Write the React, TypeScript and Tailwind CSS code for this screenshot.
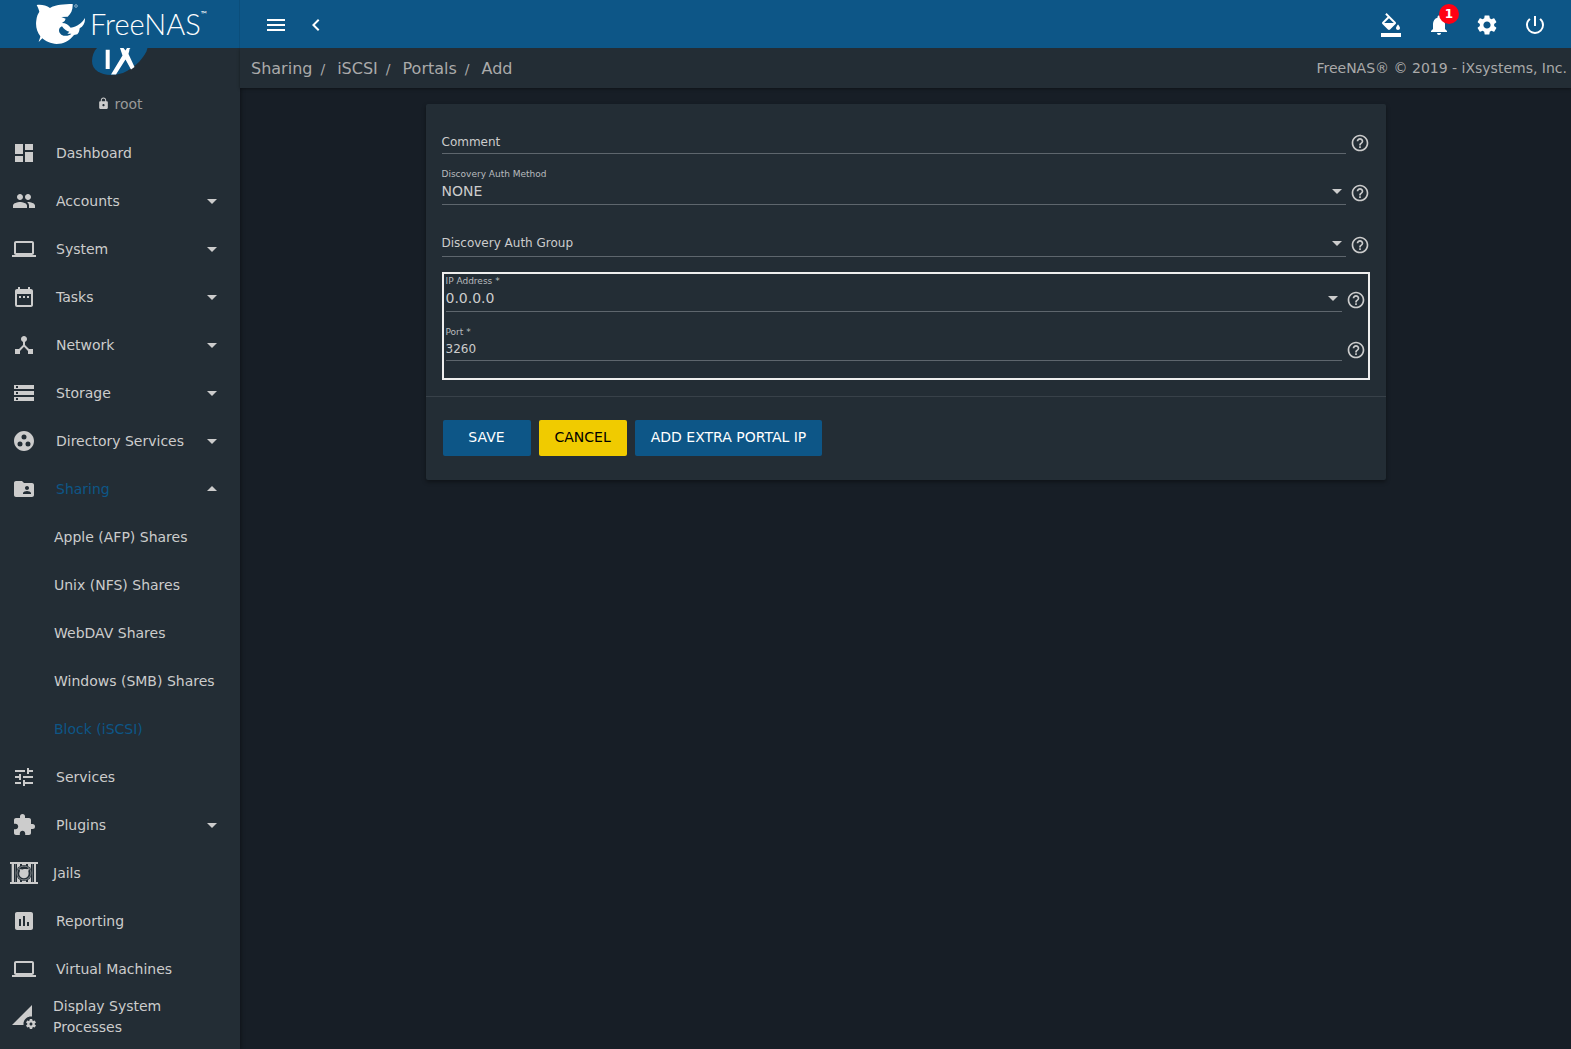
import { useState, type ReactNode } from 'react';
import {
  MdArrowDropDown, MdArrowDropUp, MdAssessment, MdChevronLeft, MdDashboard, MdDateRange, MdDeviceHub,
  MdExtension, MdFolderShared, MdFormatColorFill, MdGroupWork, MdHelpOutline, MdLaptop, MdLock, MdMenu,
  MdNotifications, MdPeople, MdPermDataSetting, MdPowerSettingsNew, MdSettings, MdStorage, MdTune,
} from 'react-icons/md';

function Shark() {
  return (
    <svg viewBox="108 6 150 126" className="h-[42px] w-[50px] shrink-0" fill="#fff" aria-hidden="true">
      <path d="M110 12 C122 10 138 12 150 21 C166 11 192 9 218 9 C219 24 214 38 203 47 L184 48 L197 53 L194 60 L186 66 C198 66 205 71 212 80 C232 77 246 66 255 51 C256 66 250 76 239 82 C238 88 238 94 232 100 L222 102 C208 120 190 129 170 129 C152 128 136 121 127 112 L116 123 C118 116 120 112 121 106 C111 93 106 76 109 58 C110 46 114 38 118 32 C116 24 113 18 110 12 Z" />
      <path d="M186 76 C175 80 174 94 184 101 C194 107 208 105 214 98 L202 98 L208 92 C199 91 192 84 186 76 Z" fill="#0d5687" />
      <circle cx="228" cy="15" r="4" fill="none" stroke="#fff" strokeWidth="1.5" />
    </svg>
  );
}

function JailsIcon() {
  return (
    <svg viewBox="0 0 28 24" className="h-6 w-7" fill="#ccc" aria-hidden="true">
      <path d="M0 1h28v2H0zM0 21h28v2H0zM2 3h2v18H2zM7 3h3v18H7zM12 3h4v18h-4zM18 3h3v18h-3zM24 3h2v18h-2z" />
      <path d="M1 3h.6v18H1zM5 3h.6v18H5zM22.4 3h.6v18h-.6z" opacity="0.6" />
      <circle cx="14" cy="12" r="8" fill="#232d35" />
      <circle cx="14" cy="12" r="7" fill="none" stroke="#ccc" strokeWidth="0.7" opacity="0.8" />
      <path d="M9.5 8l3 .5c2-.8 3.500-.6 4.500-.2l2-.8-.7 2.700c1.200 4-1 7-4.300 7-4 0-6-4-4-7.200z" />
    </svg>
  );
}

type Item = { label: string; icon: ReactNode; expand?: 'down' | 'up'; tight?: boolean; children?: string[] };

const items: Item[] = [
  { label: 'Dashboard', icon: <MdDashboard size={24} /> },
  { label: 'Accounts', icon: <MdPeople size={24} />, expand: 'down' },
  { label: 'System', icon: <MdLaptop size={24} />, expand: 'down' },
  { label: 'Tasks', icon: <MdDateRange size={24} />, expand: 'down' },
  { label: 'Network', icon: <MdDeviceHub size={24} />, expand: 'down' },
  { label: 'Storage', icon: <MdStorage size={24} />, expand: 'down' },
  { label: 'Directory Services', icon: <MdGroupWork size={24} />, expand: 'down' },
  {
    label: 'Sharing', icon: <MdFolderShared size={24} />, expand: 'up',
    children: ['Apple (AFP) Shares', 'Unix (NFS) Shares', 'WebDAV Shares', 'Windows (SMB) Shares', 'Block (iSCSI)'],
  },
  { label: 'Services', icon: <MdTune size={24} /> },
  { label: 'Plugins', icon: <MdExtension size={24} />, expand: 'down' },
  { label: 'Jails', icon: <JailsIcon />, tight: true },
  { label: 'Reporting', icon: <MdAssessment size={24} /> },
  { label: 'Virtual Machines', icon: <MdLaptop size={24} /> },
  { label: 'Display System Processes', icon: <MdPermDataSetting size={24} />, tight: true },
];

function NavItem({ item }: { item: Item }) {
  const active = item.expand === 'up';
  return (
    <li>
      <a href="#" className="flex h-12 items-center pr-4">
        <span className="flex w-12 shrink-0 justify-center">{item.icon}</span>
        <span className={`flex-1 leading-[21px] ${item.tight ? 'pl-[5px]' : 'pl-2'} ${active ? 'text-[#0d5687]' : ''}`}>{item.label}</span>
        {item.expand === 'down' && <MdArrowDropDown size={24} />}
        {item.expand === 'up' && <MdArrowDropUp size={24} />}
      </a>
      {item.children && (
        <ul>
          {item.children.map((c) => (
            <li key={c}>
              <a href="#" className={`flex h-12 items-center pl-[54px] ${c.startsWith('Block') ? 'text-[#0d5687]' : ''}`}>{c}</a>
            </li>
          ))}
        </ul>
      )}
    </li>
  );
}

function Help({ label }: { label: string }) {
  return (
    <button type="button" aria-label={`Help: ${label}`} className="ml-1 flex size-5 shrink-0 items-center justify-center">
      <MdHelpOutline size={20} />
    </button>
  );
}

const control = 'block w-full appearance-none border-b border-[#5e666d] bg-transparent outline-none';

function SelectField({ id, label, options, float }: { id: string; label: string; options: string[]; float: boolean }) {
  return (
    <div className="flex">
      <div className="relative flex-1">
        {float ? (
          <>
            <label htmlFor={id} className="block h-3 text-[9px] leading-3 text-[#b8bbbe]">{label}</label>
            <select id={id} className={`${control} h-[25px] pb-px text-[14px]`}>
              {options.map((o) => <option key={o}>{o}</option>)}
            </select>
          </>
        ) : (
          <>
            <label htmlFor={id} className="absolute top-4 left-0 text-[12px] leading-4">{label}</label>
            <select id={id} className={`${control} h-[38px]`}>
              {options.map((o) => <option key={o}>{o}</option>)}
            </select>
          </>
        )}
        <MdArrowDropDown size={24} className="pointer-events-none absolute right-[-3px] bottom-[2px]" />
      </div>
      <div className="flex items-end pb-0.5"><Help label={label} /></div>
    </div>
  );
}

export default function App() {
  const [comment, setComment] = useState('');
  const [port, setPort] = useState('3260');
  return (
    <div className="flex h-screen flex-col overflow-hidden bg-[#171e26] font-['DejaVu_Sans',sans-serif] text-[14px] text-[#ccc]">
      <header className="z-10 flex h-12 shrink-0 bg-[#0d5687] text-white">
        <div className="flex w-60 shrink-0 items-center border-r border-[#0b4e7b] pl-9">
          <Shark />
          <span className="ml-1 flex items-start font-['Lato',sans-serif] text-[29px] leading-9 font-light">
            FreeNAS<sup className="top-0 text-[8px] leading-4 font-normal">™</sup>
          </span>
        </div>
        <div className="flex flex-1 items-center justify-between px-6 pt-0.5">
          <div className="flex items-center gap-4">
            <button type="button" aria-label="Toggle menu"><MdMenu size={24} /></button>
            <button type="button" aria-label="Collapse menu"><MdChevronLeft size={24} /></button>
          </div>
          <div className="flex items-center gap-6">
            <button type="button" aria-label="Theme"><MdFormatColorFill size={24} /></button>
            <button type="button" aria-label="Notifications" className="relative">
              <MdNotifications size={24} />
              <span className="absolute -top-[9px] left-3 flex size-5 items-center justify-center rounded-full bg-[#ff0013] text-[12px] font-bold">1</span>
            </button>
            <button type="button" aria-label="Settings"><MdSettings size={24} /></button>
            <button type="button" aria-label="Power"><MdPowerSettingsNew size={24} /></button>
          </div>
        </div>
      </header>

      <div className="flex min-h-0 flex-1">
        <nav className="w-60 shrink-0 overflow-hidden bg-[#232d35] shadow-[1px_0_4px_rgba(0,0,0,0.4)]">
          <div className="flex h-[81px] flex-col items-center">
            <svg viewBox="0 0 58 28" className="h-7 w-[58px] shrink-0" aria-hidden="true">
              <path d="M56.500 0C55 8 44 20 32 25C16 30 1 25 1 13C1 8 3 3 6 0Z" fill="#0d5687" />
              <path d="M14.700 1.700h4v19.300h-4zM29 0h3.500l2 2.500 1.500-2.500h3.500l-1 1c0 2-1 4-1 5l6 13-3.500 2.500-5.500-10-9.500 15h-5l11.500-19z" fill="#fff" />
            </svg>
            <div className="mt-5 flex items-center gap-1 text-[#999]">
              <MdLock size={13} className="mb-0.5 text-[#ccc]" />
              <span className="leading-4">root</span>
            </div>
          </div>
          <ul>{items.map((i) => <NavItem key={i.label} item={i} />)}</ul>
        </nav>

        <div className="flex min-w-0 flex-1 flex-col">
          <div className="flex h-10 shrink-0 items-center justify-between bg-[#232d35] pr-1 pl-[11px] text-[#aaa] shadow-[0_1px_3px_rgba(0,0,0,0.4)]">
            <nav aria-label="Breadcrumb" className="flex items-center pt-0.5 text-[16px]">
              {['Sharing', 'iSCSI', 'Portals'].map((b) => (
                <span key={b} className="flex items-center">
                  <a href="#">{b}</a>
                  <span className="mr-3 ml-2 text-[14px]">/</span>
                </span>
              ))}
              <a href="#">Add</a>
            </nav>
            <span>FreeNAS® © 2019 - iXsystems, Inc.</span>
          </div>

          <main className="flex justify-center p-4">
            <form className="w-full max-w-[960px] rounded-xs bg-[#232d35] shadow-[0_2px_4px_rgba(0,0,0,0.4)]" onSubmit={(e) => e.preventDefault()}>
              <div className="border-b border-[#384149] px-4 pt-6 pb-4">
                <div className="flex">
                  <div className="relative flex-1">
                    <label htmlFor="comment" className="absolute top-[6px] left-0 text-[12px] leading-4">Comment</label>
                    <input id="comment" value={comment} onChange={(e) => setComment(e.target.value)} className={`${control} h-[26px]`} />
                  </div>
                  <div className="flex items-end pb-px"><Help label="Comment" /></div>
                </div>
                <div className="mt-[14px]">
                  <SelectField id="method" label="Discovery Auth Method" options={['NONE', 'CHAP', 'Mutual CHAP']} float />
                </div>
                <div className="mt-[14px]">
                  <SelectField id="group" label="Discovery Auth Group" options={['']} float={false} />
                </div>
                <div className="mt-[15px] border-2 border-[#eee] px-[2px] pt-px pb-[17px]">
                  <SelectField id="ip" label="IP Address *" options={['0.0.0.0']} float />
                  <div className="mt-[14px] flex">
                    <div className="flex-1">
                      <label htmlFor="port" className="block h-3 text-[9px] leading-3 text-[#b8bbbe]">Port *</label>
                      <input id="port" value={port} onChange={(e) => setPort(e.target.value)} className={`${control} h-[23px] text-[12px]`} />
                    </div>
                    <div className="flex items-end pb-px"><Help label="Port" /></div>
                  </div>
                </div>
              </div>
              <div className="flex gap-2 px-[17px] pt-[23px] pb-6">
                <button type="submit" className="h-9 w-22 rounded-xs bg-[#0d5687] pb-0.5 text-white">SAVE</button>
                <button type="button" className="h-9 rounded-xs bg-[#f0cb00] px-4 pb-0.5 text-black">CANCEL</button>
                <button type="button" className="h-9 rounded-xs bg-[#0d5687] px-4 pb-0.5 text-white">ADD EXTRA PORTAL IP</button>
              </div>
            </form>
          </main>
        </div>
      </div>
    </div>
  );
}
